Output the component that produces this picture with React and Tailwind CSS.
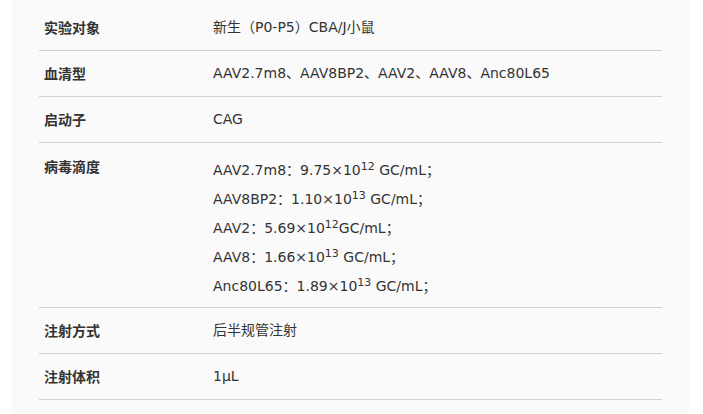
export default function App() {
  const rows = [
    { label: "实验对象", value: ["新生（P0-P5）CBA/J小鼠"] },
    { label: "血清型", value: ["AAV2.7m8、AAV8BP2、AAV2、AAV8、Anc80L65"] },
    { label: "启动子", value: ["CAG"] },
    {
      label: "病毒滴度",
      value: [
        <>AAV2.7m8：9.75×10<sup className="text-[11px]">12</sup> GC/mL；</>,
        <>AAV8BP2：1.10×10<sup className="text-[11px]">13</sup> GC/mL；</>,
        <>AAV2：5.69×10<sup className="text-[11px]">12</sup>GC/mL；</>,
        <>AAV8：1.66×10<sup className="text-[11px]">13</sup> GC/mL；</>,
        <>Anc80L65：1.89×10<sup className="text-[11px]">13</sup> GC/mL；</>,
      ],
    },
    { label: "注射方式", value: ["后半规管注射"] },
    { label: "注射体积", value: ["1μL"] },
  ];

  return (
    <div className="w-[703px] h-[414px] bg-white overflow-hidden">
      <div
        className="ml-[12px] w-[677px] h-full bg-[#fafafa] px-[27px] pt-[5px] text-[#333]"
        style={{ fontFamily: '"DejaVu Sans", "Noto Sans CJK SC", sans-serif' }}
      >
        {rows.map((row, i) => {
          const multi = row.value.length > 1;
          return (
            <div
              key={i}
              className={multi ? "flex border-b border-[#d0d0d0] pt-[13px] pb-[6px]" : "flex border-b border-[#d0d0d0] py-[12px]"}
            >
              <div
                className="w-[174px] shrink-0 pl-[5px] text-[14px] font-bold leading-[21px]"
                style={{ fontFamily: '"Noto Sans CJK SC", sans-serif' }}
              >
                {row.label}
              </div>
              {multi ? (
                <div className="text-[14px] leading-[29px]">
                  {row.value.map((v, j) => (
                    <p key={j}>{v}</p>
                  ))}
                </div>
              ) : (
                <div className="text-[14px] leading-[21px]">{row.value[0]}</div>
              )}
            </div>
          );
        })}
      </div>
    </div>
  );
}
